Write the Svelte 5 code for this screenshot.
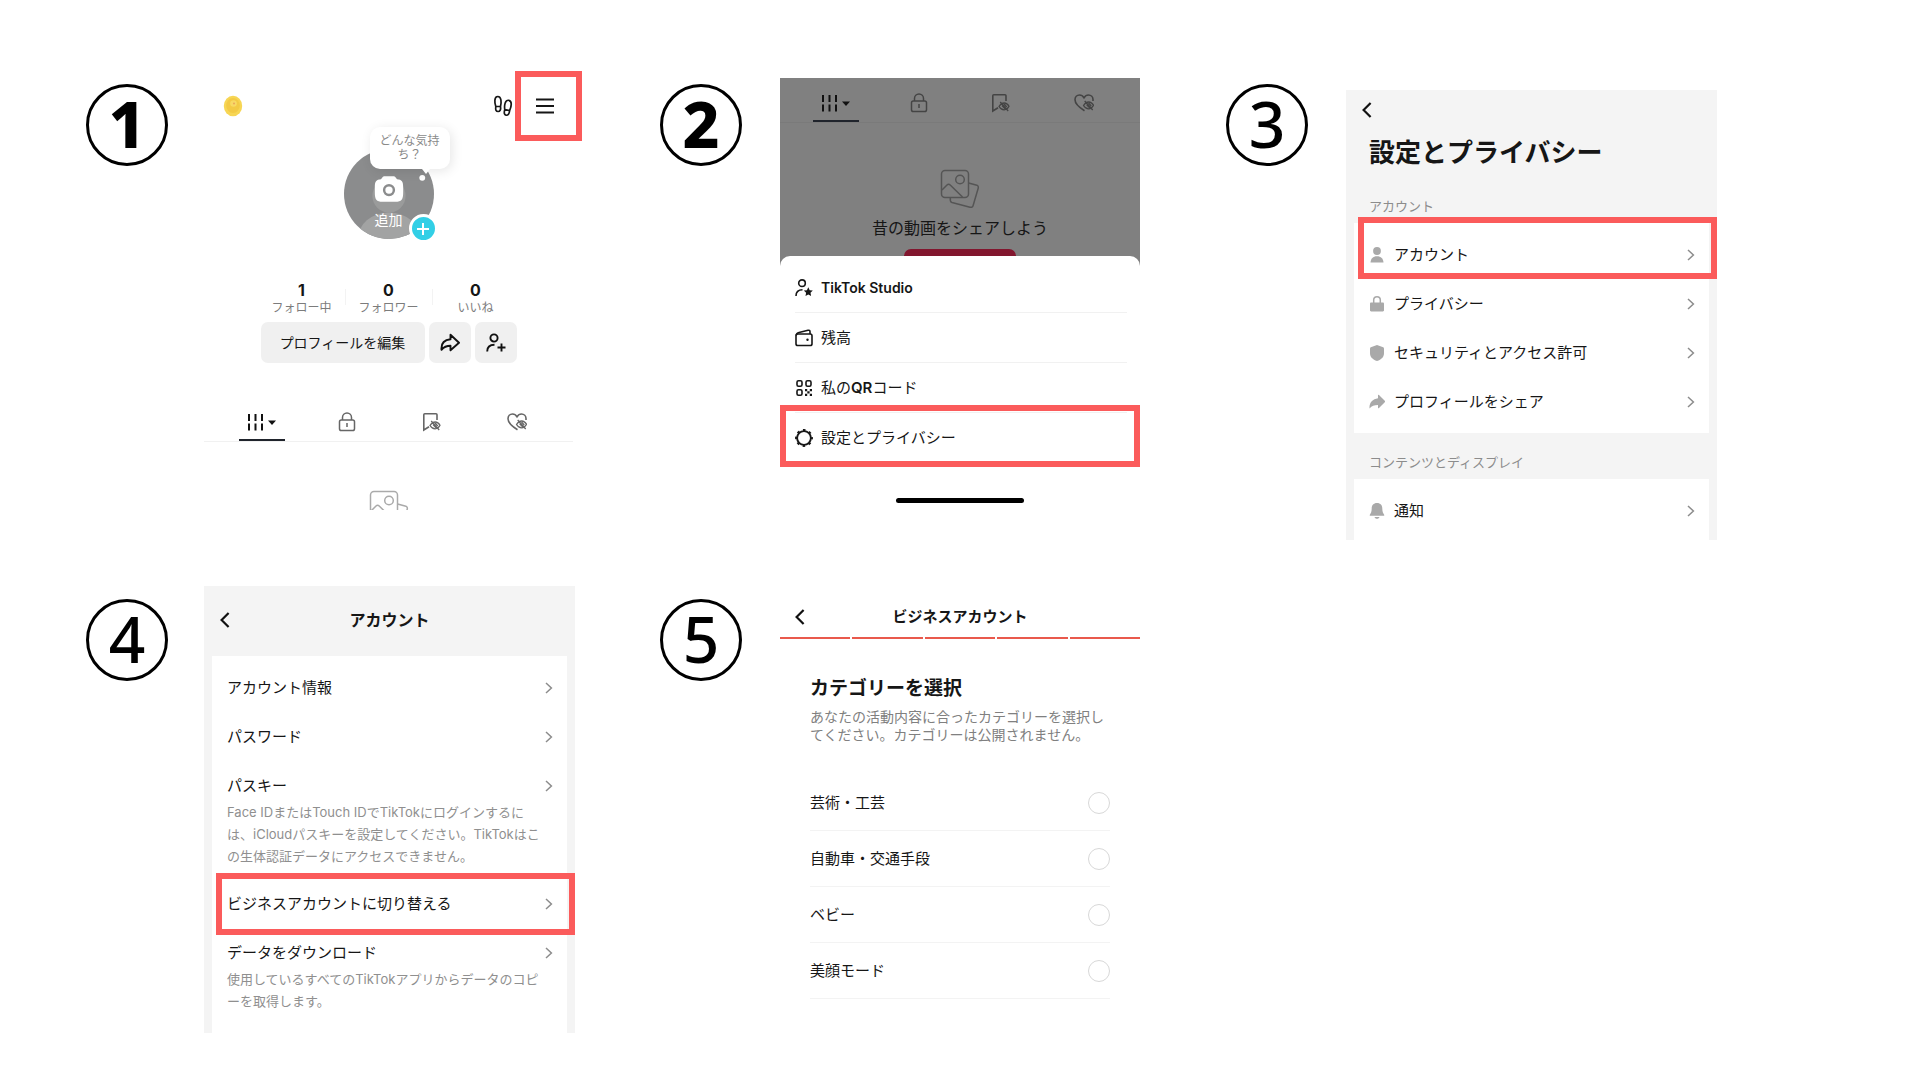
<script>
  let category = $state('');

  const menu = [
    { icon: 'star', label: 'TikTok Studio' },
    { icon: 'wallet', label: '残高' },
    { icon: 'qr', label: '私の', strong: 'QR', rest: 'コード' },
    { icon: 'gear', label: '設定とプライバシー', marked: true }
  ];

  const settings = [
    { icon: 'person', label: 'アカウント', marked: true },
    { icon: 'lock', label: 'プライバシー' },
    { icon: 'shield', label: 'セキュリティとアクセス許可' },
    { icon: 'share', label: 'プロフィールをシェア' }
  ];

  const account = [
    { label: 'アカウント情報' },
    { label: 'パスワード' },
    {
      label: 'パスキー',
      note: 'Face IDまたはTouch IDでTikTokにログインするに\nは、iCloudパスキーを設定してください。TikTokはこ\nの生体認証データにアクセスできません。'
    },
    { label: 'ビジネスアカウントに切り替える', marked: true },
    {
      label: 'データをダウンロード',
      note: '使用しているすべてのTikTokアプリからデータのコピ\nーを取得します。'
    }
  ];

  const categories = ['芸術・工芸', '自動車・交通手段', 'ベビー', '美顔モード'];
</script>

{#snippet back()}
  <button class="back" aria-label="戻る">
    <svg width="10" height="16" viewBox="0 0 10 16"><path d="M8.6 1 1.6 8l7 7" fill="none" stroke="#111" stroke-width="2.2" /></svg>
  </button>
{/snippet}

{#snippet chevron()}
  <svg class="chevron" width="8" height="12" viewBox="0 0 8 12"><path d="M1 1l5.4 5L1 11" fill="none" stroke="#8c8c8c" stroke-width="1.5" /></svg>
{/snippet}

{#snippet hiddenEye()}
  <path d="M8 13.500c1.400-2.300 3.200-3.500 5.200-3.500s3.600 1.200 4.800 3.300c-1.200 2.300-2.800 3.500-4.800 3.500S9.300 15.700 8 13.500zM9.200 9l8 9M11 12.500l3.300 3.500M13 11l2.800 3" stroke-width="1.300" />
{/snippet}

{#snippet tabs()}
  <nav class="tabs">
    <button class="tab active" aria-label="投稿">
      <svg width="30" height="20" viewBox="0 0 30 20">
        <path d="M2 2v7M8.500 2v7M15 2v7M2 11.500v7M8.500 11.500v7M15 11.500v7" stroke="#111" stroke-width="2" />
        <path d="M21 8.500h8l-4 4.500z" fill="#111" />
      </svg>
    </button>
    <button class="tab" aria-label="非公開">
      <svg width="20" height="20" viewBox="0 0 20 20" fill="none" stroke="currentColor" stroke-width="1.500">
        <rect x="2.500" y="8" width="15" height="10.500" rx="1.800" />
        <path d="M5.500 8V5.500a4.500 4.500 0 0 1 9 0V8M10 11v4" />
      </svg>
    </button>
    <button class="tab" aria-label="保存済み">
      <svg width="20" height="20" viewBox="0 0 20 20" fill="none" stroke="currentColor" stroke-width="1.600">
        <path d="M15 8V2.800c0-.6-.4-1-1-1H2.800c-.6 0-1 .4-1 1v15.200l5.200-3.300" />
        {@render hiddenEye()}
      </svg>
    </button>
    <button class="tab" aria-label="いいね">
      <svg width="20" height="20" viewBox="0 0 20 20" fill="none" stroke="currentColor" stroke-width="1.600">
        <path d="M10.500 17.800C4.500 14 1 10.800 1 6.800 1 4 3 2 5.500 2c1.900 0 3.400 1 4.500 2.800C11.100 3 12.600 2 14.500 2 17 2 19 4 19 6.500V8" />
        <g transform="translate(1.500 -1)">{@render hiddenEye()}</g>
      </svg>
    </button>
  </nav>
{/snippet}

{#snippet photos()}
  <svg class="photos" width="40" height="40" viewBox="0 0 40 40" fill="none" stroke="currentColor" stroke-width="1.500">
    <rect x="1.500" y="1.500" width="27" height="27" rx="3.500" />
    <circle cx="20" cy="10.500" r="4.300" />
    <path d="M2 21l5-5c1-1 2.200-1 3.200 0L22.500 28M28.500 14l7.500 2c2 .5 2.700 1.500 2.200 3.200l-5 17c-.5 1.800-1.600 2.500-3.200 2L12 33.500c-1.600-.5-2-1.600-1.700-4.500" />
  </svg>
{/snippet}

{#snippet menuIcon(name)}
  <svg width="18" height="18" viewBox="0 0 18 18" fill="none" stroke="#161616" stroke-width="1.600">
    {#if name === 'star'}
      <circle cx="7" cy="4.200" r="3.300" />
      <path d="M1 17c0-4 2.500-6.300 6.500-6.300" />
      <path d="M13.300 8.300l1.400 2.900 3.100.4-2.300 2.200.6 3.200-2.800-1.600-2.800 1.600.6-3.200-2.300-2.200 3.100-.4z" fill="#161616" stroke="none" />
    {:else if name === 'wallet'}
      <rect x="1" y="5" width="16" height="11.500" rx="1.800" />
      <path d="M1.200 6.500c.2-2 1-2.600 2.800-3L13 1.300c1.300-.3 2 .3 2 1.500V5" />
      <circle cx="12.500" cy="10.700" r="1.200" fill="#161616" stroke="none" />
    {:else if name === 'qr'}
      <rect x="2" y="1.800" width="5" height="5.500" rx="1.500" />
      <rect x="11" y="1.800" width="5" height="5.500" rx="1.500" />
      <rect x="2" y="10.700" width="5" height="5.500" rx="1.500" />
      <path d="M10 10h2.200v2.200H10zM14.800 10H17v2.200h-2.200zM12.300 12.200h2.300v2.300h-2.300zM10 14.800h2.200V17H10zM14.800 14.800H17V17h-2.200z" fill="#161616" stroke="none" />
    {:else}
      <circle cx="9" cy="9" r="6.900" stroke-width="1.900" />
      <circle cx="9" cy="9" r="8" stroke-width="1.900" stroke-dasharray="2.600 3.683" stroke-dashoffset="1.300" />
    {/if}
  </svg>
{/snippet}

{#snippet greyIcon(name)}
  <svg width="16" height="18" viewBox="0 0 16 18" fill="#a9a9a9">
    {#if name === 'person'}
      <circle cx="8" cy="5" r="3.900" />
      <path d="M1.500 16.500c.2-4 2.500-6.300 6.500-6.300s6.300 2.300 6.500 6.300z" />
    {:else if name === 'lock'}
      <path d="M2.200 7.500h11.600c.7 0 1.200.5 1.200 1.200v6.600c0 .7-.5 1.200-1.200 1.200H2.200c-.7 0-1.200-.5-1.200-1.200V8.700c0-.7.5-1.200 1.200-1.200z" />
      <path d="M4.700 8V5a3.300 3.300 0 0 1 6.600 0v3" fill="none" stroke="#a9a9a9" stroke-width="1.500" />
    {:else if name === 'shield'}
      <path d="M8 1l6.200 2.200c.5.200.8.500.8 1V9c0 4-2.500 6.500-7 8-4.500-1.500-7-4-7-8V4.200c0-.5.300-.8.8-1z" />
    {:else if name === 'share'}
      <path d="M9 2.300c0-.6.500-.8 1-.4l6 6c.3.400.3.800 0 1.200l-6 6c-.5.400-1 .2-1-.4V12c-4 0-6 .8-8.500 3.500C.2 9.500 3.500 6 9 5.200z" />
    {:else}
      <path d="M8 1c3.500 0 5.300 2.300 5.300 5.500 0 3 .7 4.500 2 6.500.2.400 0 .7-.4.700H1.100c-.4 0-.6-.3-.4-.7 1.300-2 2-3.500 2-6.500C2.700 3.300 4.500 1 8 1zM5.500 15h5c-.3 1.200-1.200 1.800-2.500 1.800S5.800 16.200 5.500 15z" />
    {/if}
  </svg>
{/snippet}

<main>
  <section class="step">
    <div class="badge heavy">1</div>
    <div class="panel profile">
      <header>
        <svg width="20" height="22" viewBox="0 0 20 22">
          <ellipse cx="10" cy="11" rx="9.200" ry="10.300" fill="#f7d654" />
          <ellipse cx="10" cy="10.500" rx="6.800" ry="7.500" fill="#f3ca45" />
          <circle cx="10.500" cy="8.500" r="3.300" fill="#f8d964" />
          <circle cx="11" cy="8.500" r="1" fill="#eba45a" />
        </svg>
        <button class="steps" aria-label="足あと">
          <svg width="20" height="22" viewBox="0 0 20 22" fill="none" stroke="#161616" stroke-width="1.700">
            <path d="M2.800 11.500C1.500 8 1 1.500 4.800 1.500S8.500 8 7.500 11.500zM2.800 11.500c-.5 3.500.3 5 2.300 5s2.900-2 2.400-5" />
            <path d="M11.800 14.500c-.8-4.500.5-9.700 4-9.200 3.600.6 2.600 6.200.9 10.200zM11.800 14.500c-1 3.500-.5 5.300 1.200 5.700 2 .4 3.300-1.500 3.700-4.700" />
          </svg>
        </button>
        <button class="hamburger" aria-label="メニュー">
          <svg width="18" height="16" viewBox="0 0 18 16"><path d="M0 1.500h18M0 8h18M0 14.500h18" stroke="#161616" stroke-width="2" /></svg>
        </button>
      </header>

      <div class="avatar">
        <svg width="90" height="90" viewBox="0 0 92 92">
          <defs><clipPath id="round"><circle cx="46" cy="46" r="46" /></clipPath></defs>
          <g clip-path="url(#round)">
            <rect width="92" height="92" fill="#8b8c8d" />
            <circle cx="46" cy="48" r="17" fill="#9a9b9b" />
            <ellipse cx="46" cy="92" rx="32" ry="27" fill="#a2a3a3" />
          </g>
          <path d="M39 29.500c.8-1.300 1.500-1.700 3-1.700h8c1.500 0 2.200.4 3 1.700l1.200 1.500c5 .3 6.300 2.500 6.300 8v5c0 8-1.500 10-8 10h-13c-6.500 0-8-2-8-10v-5c0-5.500 1.300-7.700 6.300-8z" fill="#fff" />
          <circle cx="46" cy="42" r="5" fill="#fff" stroke="#8b8c8d" stroke-width="2.500" />
          <circle cx="80" cy="29.500" r="3" fill="#fff" />
        </svg>
        <span class="add">追加</span>
        <div class="bubble">どんな気持ち？</div>
        <button class="plus" aria-label="追加">
          <svg width="12" height="12" viewBox="0 0 12 12"><path d="M6 0v12M0 6h12" stroke="#fff" stroke-width="2" /></svg>
        </button>
      </div>

      <dl class="stats">
        <div><dd>1</dd><dt>フォロー中</dt></div>
        <div><dd>0</dd><dt>フォロワー</dt></div>
        <div><dd>0</dd><dt>いいね</dt></div>
      </dl>

      <div class="actions">
        <button class="edit">プロフィールを編集</button>
        <button aria-label="シェア">
          <svg width="20" height="20" viewBox="0 0 20 20" fill="none" stroke="#111" stroke-width="1.900" stroke-linejoin="round"><path d="M10.500 1.800l8.500 8-8.500 7.500v-4.500c-4 0-6.500 1-9 4C1 10.500 4.500 6.800 10.500 6.300z" /></svg>
        </button>
        <button aria-label="友達を追加">
          <svg width="20" height="20" viewBox="0 0 20 20" fill="none" stroke="#111" stroke-width="1.900"><circle cx="8" cy="5" r="3.600" /><path d="M1.200 18.500c0-4.500 2.800-6.700 7.300-6.700M15.500 10.500v8M11.500 14.500h8" /></svg>
        </button>
      </div>

      {@render tabs()}
      <div class="cut">{@render photos()}</div>
    </div>
  </section>

  <section class="step second">
    <div class="badge heavy">2</div>
    <div class="panel drawer">
      {@render tabs()}
      {@render photos()}
      <p class="prompt">昔の動画をシェアしよう</p>
      <div class="upload"></div>
      <div class="sheet">
        <ul>
          {#each menu as item}
            <li>
              <button class={{ marked: item.marked }}>
                {@render menuIcon(item.icon)}
                <span class:latin={item.icon === 'star'}>{item.label}{#if item.strong}<b>{item.strong}</b>{item.rest}{/if}</span>
              </button>
            </li>
          {/each}
        </ul>
        <div class="home"></div>
      </div>
    </div>
  </section>

  <section class="step third">
    <div class="badge">3</div>
    <div class="panel grey settings">
      {@render back()}
      <h1>設定とプライバシー</h1>
      <h2>アカウント</h2>
      <div class="card">
        {#each settings as item}
          <button class={['row', { marked: item.marked }]}>
            {@render greyIcon(item.icon)}
            <span>{item.label}</span>
            {@render chevron()}
          </button>
        {/each}
      </div>
      <h2 class="next">コンテンツとディスプレイ</h2>
      <div class="card last">
        <button class="row">
          {@render greyIcon('bell')}
          <span>通知</span>
          {@render chevron()}
        </button>
      </div>
    </div>
  </section>

  <section class="step">
    <div class="badge">4</div>
    <div class="panel grey account">
      <div class="bar">
        {@render back()}
        <h1>アカウント</h1>
      </div>
      <div class="card">
        {#each account as item}
          <button class={['row', { marked: item.marked }]}>
            <span>{item.label}</span>
            {@render chevron()}
          </button>
          {#if item.note}
            <p>{item.note}</p>
          {/if}
        {/each}
      </div>
    </div>
  </section>

  <section class="step second">
    <div class="badge">5</div>
    <div class="panel business">
      <div class="bar">
        {@render back()}
        <h1>ビジネスアカウント</h1>
      </div>
      <div class="progress">
        {#each Array(5) as _}<i></i>{/each}
      </div>
      <div class="form">
        <h2>カテゴリーを選択</h2>
        <p>あなたの活動内容に合ったカテゴリーを選択してください。カテゴリーは公開されません。</p>
        {#each categories as name}
          <label>
            {name}
            <input type="radio" name="category" value={name} bind:group={category} />
          </label>
        {/each}
      </div>
    </div>
  </section>
</main>

<style>
  :global(body) {
    margin: 0;
    background: #fff;
  }

  main {
    display: grid;
    grid-template-columns: 574fr 566fr 694fr;
    row-gap: 46px;
    padding: 71px 0 40px 86px;
    font-family: "Inter", "Noto Sans CJK JP", sans-serif;
    font-size: 15px;
    line-height: 20px;
    color: #161616;
  }

  h1, h2, p, ul, dl, dd {
    margin: 0;
    padding: 0;
  }

  button {
    padding: 0;
    border: 0;
    background: none;
    font: inherit;
    color: inherit;
    cursor: pointer;
  }

  svg {
    display: block;
    flex: none;
  }

  /* steps */
  .step {
    display: flex;
    align-items: flex-start;
    gap: 36px;
    padding-right: 85px;
  }

  .second {
    gap: 38px;
    padding-right: 86px;
  }

  .third {
    gap: 38px;
    padding-right: 203px;
  }

  .badge {
    flex: none;
    box-sizing: border-box;
    width: 82px;
    height: 82px;
    margin-top: 13px;
    border: 3px solid #000;
    border-radius: 50%;
    font-family: "Noto Sans", "Open Sans", sans-serif;
    font-size: 64px;
    font-weight: 500;
    line-height: 74px;
    text-align: center;
    color: #000;
  }

  .heavy {
    font-weight: 800;
  }

  .panel {
    flex: 1;
    min-width: 0;
  }

  .grey {
    background: #f4f4f4;
  }

  .marked {
    position: relative;
  }

  .marked::after {
    content: "";
    position: absolute;
    inset: -6px -8px -7px 4px;
    border: 6px solid #fb5b5b;
  }

  /* profile */
  .profile {
    box-sizing: border-box;
    padding-right: 2px;
  }

  .profile header {
    display: flex;
    align-items: center;
    margin-right: -9px;
    padding-left: 19px;
  }

  .steps {
    margin: 0 2px 0 auto;
  }

  .hamburger {
    display: flex;
    align-items: center;
    box-sizing: border-box;
    width: 67px;
    height: 70px;
    padding-left: 15px;
    border: 6px solid #fb5b5b;
  }

  .avatar {
    position: relative;
    width: 90px;
    margin: 8px auto 0;
  }

  .add {
    position: absolute;
    left: 0;
    right: 0;
    bottom: 9px;
    font-size: 14px;
    text-align: center;
    color: #fff;
  }

  .bubble {
    position: absolute;
    top: -22px;
    left: 26px;
    box-sizing: border-box;
    width: 80px;
    padding: 7px 8px;
    border-radius: 10px;
    background: #fff;
    box-shadow: 2px 2px 12px rgba(0, 0, 0, 0.1);
    font-size: 12px;
    line-height: 14px;
    text-align: center;
    color: #8a8a8a;
  }

  .bubble::after {
    content: "";
    position: absolute;
    top: 100%;
    left: 52px;
    border: solid transparent;
    border-width: 5px 4px 0;
    border-top-color: #fff;
  }

  .plus {
    position: absolute;
    right: -4px;
    bottom: -4px;
    display: flex;
    align-items: center;
    justify-content: center;
    width: 29px;
    height: 29px;
    box-sizing: border-box;
    border: 3px solid #fff;
    border-radius: 50%;
    background: #32cfe6;
  }

  .stats {
    display: flex;
    justify-content: center;
    margin-top: 41px;
    text-align: center;
  }

  .stats div {
    width: 87px;
    box-sizing: border-box;
  }

  .stats div + div {
    background: linear-gradient(#f3f3f3, #f3f3f3) 0 9px / 1px 16px no-repeat;
  }

  .stats dd {
    font-size: 16px;
    font-weight: 700;
  }

  .stats dt {
    font-size: 12px;
    line-height: 16px;
    color: #7c7c7c;
  }

  .actions {
    display: flex;
    justify-content: center;
    gap: 4px;
    margin-top: 6px;
  }

  .actions button {
    display: flex;
    align-items: center;
    justify-content: center;
    width: 42px;
    height: 41px;
    border-radius: 7px;
    background: #f0f0f0;
  }

  .actions .edit {
    width: 164px;
    font-size: 14px;
  }

  .tabs {
    display: flex;
    height: 38px;
    padding: 0 15px;
    color: #666;
  }

  .profile .tabs {
    margin-top: 40px;
    padding-right: 14px;
    border-bottom: 1px solid #f1f1f1;
  }

  .tab {
    flex: 1;
    display: flex;
    justify-content: center;
  }

  .tab svg {
    margin-top: 9px;
  }

  .active {
    background: linear-gradient(#20242c, #20242c) center bottom / 46px 2px no-repeat;
  }

  .photos {
    margin: 0 auto;
  }

  .cut {
    height: 20px;
    margin-top: 48px;
    overflow: hidden;
    color: #aaa;
  }

  /* drawer */
  .drawer {
    margin-top: 7px;
    background: #808080;
    color: #161616;
  }

  .drawer .tabs {
    height: 38px;
    padding-top: 6px;
    border-bottom: 1px solid #7a7a7a;
    color: #444;
  }

  .drawer .photos {
    margin-top: 46px;
    color: #555;
  }

  .prompt {
    margin: 7px 0 9px;
    font-size: 16px;
    line-height: 24px;
    text-align: center;
  }

  .upload {
    width: 112px;
    height: 7px;
    margin: 0 auto;
    border-radius: 12px 12px 0 0;
    background: #82162e;
  }

  .sheet {
    padding: 7px 0 12px;
    border-radius: 10px 10px 0 0;
    background: #fff;
  }

  .sheet ul {
    list-style: none;
  }

  .sheet li button {
    display: flex;
    align-items: center;
    gap: 8px;
    width: 100%;
    height: 50px;
    padding: 0 15px;
    text-align: left;
    background: linear-gradient(#f1f1f1, #f1f1f1) 15px bottom / calc(100% - 28px) 1px no-repeat;
  }

  .sheet .marked::after {
    inset: -8px 0 -4px;
  }

  .sheet b {
    font-weight: 600;
  }

  .latin {
    font-size: 14px;
    font-weight: 600;
  }

  .home {
    width: 128px;
    height: 5px;
    margin: 35px auto 0;
    border-radius: 3px;
    background: #000;
  }

  /* lists on grey */
  .card {
    margin: 0 8px;
    padding: 7px 0;
    background: #fff;
  }

  .row {
    display: flex;
    align-items: center;
    gap: 9px;
    width: 100%;
    height: 49px;
    padding: 0 14px 0 15px;
    text-align: left;
  }

  .chevron {
    margin-left: auto;
  }

  .back {
    display: block;
  }

  .settings {
    margin-top: 19px;
  }

  .settings .back {
    padding: 12px 16px;
  }

  .settings h1 {
    padding: 5px 23px 4px;
    font-size: 26px;
    font-weight: 700;
    line-height: 36px;
  }

  .settings h2 {
    padding: 21px 23px 7px;
    font-size: 13px;
    font-weight: 400;
    color: #8c8c8c;
  }

  .settings .next {
    padding-top: 19px;
  }

  .settings .last {
    padding-bottom: 5px;
  }

  .settings .marked::after {
    inset: -13px -8px 0 4px;
  }

  /* account */
  .bar {
    display: grid;
    grid-template-columns: 26px 1fr 26px;
    align-items: center;
    padding: 0 16px;
  }

  .bar h1 {
    font-size: 16px;
    font-weight: 700;
    text-align: center;
  }

  .account .bar {
    height: 68px;
    padding-bottom: 2px;
  }

  .account .card {
    padding-bottom: 9px;
  }

  .account p {
    margin: -9px 15px 12px;
    font-size: 13px;
    line-height: 22px;
    white-space: pre-line;
    color: #8f8f8f;
  }

  /* business */
  .business .bar {
    height: 40px;
    padding: 11px 15px 0;
  }

  .business h1 {
    font-size: 15px;
  }

  .progress {
    display: flex;
    gap: 2px;
  }

  .progress i {
    flex: 1;
    height: 2px;
    background: #e9594c;
  }

  .form {
    padding: 35px 30px 0;
  }

  .form h2 {
    font-size: 19px;
    font-weight: 700;
    line-height: 30px;
  }

  .form p {
    margin: 4px 0 31px;
    font-size: 14px;
    line-height: 18px;
    color: #808080;
  }

  .form label {
    display: flex;
    align-items: center;
    justify-content: space-between;
    box-sizing: border-box;
    height: 56px;
    border-bottom: 1px solid #f3f3f3;
  }

  .form input {
    appearance: none;
    box-sizing: border-box;
    width: 22px;
    height: 22px;
    margin: 0;
    border: 1px solid #d8d8d8;
    border-radius: 50%;
  }

  .form input:checked {
    border: 6px solid #e9594c;
  }
</style>
